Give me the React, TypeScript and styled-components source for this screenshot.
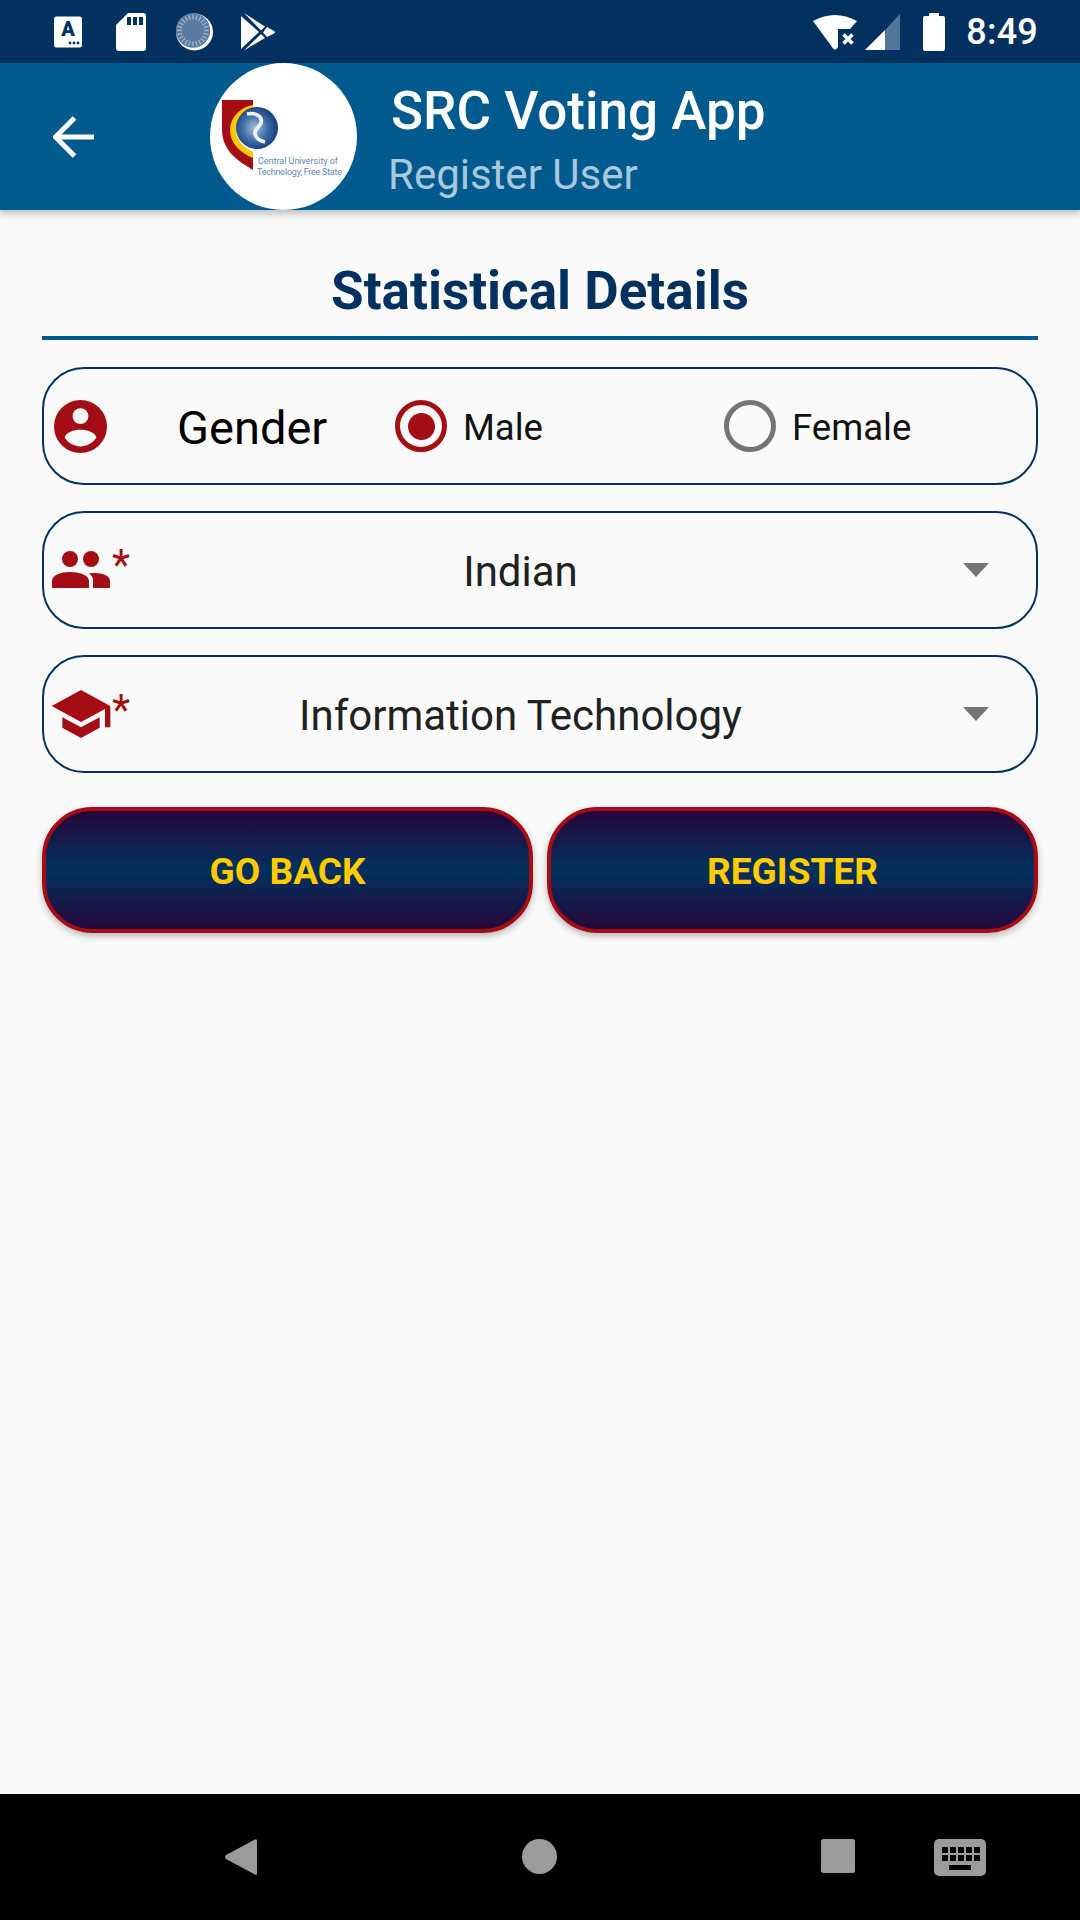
import React from "react";
import styled, { createGlobalStyle } from "styled-components";

const RED = "#a50d14";
const NAVY = "#03315f";

const Global = createGlobalStyle`
  html, body { margin: 0; padding: 0; background: #fafafa; }
  * { box-sizing: border-box; }
  #root { width: 1080px; height: 1920px; }
`;

const Screen = styled.div`
  width: 1080px;
  height: 1920px;
  display: flex;
  flex-direction: column;
  background: #fafafa;
  font-family: Roboto, "Noto Sans", sans-serif;
  overflow: hidden;
`;

const StatusBar = styled.div`
  height: 63px;
  flex: none;
  background: ${NAVY};
  display: flex;
  align-items: center;
  padding: 0 42px 0 54px;
`;

const StatusLeft = styled.div`
  display: flex;
  align-items: center;
  flex: 1;
`;

const StatusRight = styled.div`
  display: flex;
  align-items: center;
`;

const StatusIcon = styled.svg<{ $gap?: number }>`
  display: block;
  flex: none;
  margin-right: ${(p) => p.$gap ?? 0}px;
`;

const Clock = styled.span`
  font-size: 36px;
  font-weight: 500;
  color: #fff;
  line-height: 1;
  letter-spacing: 0.2px;
`;

const AppBar = styled.header`
  height: 147px;
  flex: none;
  background: #015a8d;
  display: flex;
  align-items: center;
  padding-left: 53px;
  box-shadow: 0 3px 8px rgba(0, 0, 0, 0.28);
  position: relative;
  z-index: 1;
`;

const BackIcon = styled.svg`
  display: block;
  flex: none;
  margin-right: 115px;
`;

const Logo = styled.svg`
  display: block;
  flex: none;
  margin-right: 34px;
`;

const Titles = styled.div`
  display: flex;
  flex-direction: column;
  padding-top: 10px;
`;

const AppTitle = styled.div`
  font-size: 53px;
  font-weight: 500;
  color: #fff;
  line-height: 56px;
`;

const AppSubtitle = styled.div`
  font-size: 42px;
  font-weight: 400;
  color: #a8c8dc;
  line-height: 50px;
  margin-left: -3px;
  margin-top: 11px;
`;

const Main = styled.main`
  flex: 1;
  padding: 0 42px;
  display: flex;
  flex-direction: column;
`;

const SectionTitle = styled.h1`
  margin: 0 0 27px;
  height: 130px;
  padding-top: 51px;
  border-bottom: 4px solid #015a8d;
  text-align: center;
  font-size: 53px;
  line-height: 60px;
  font-weight: 700;
  color: ${NAVY};
`;

const FieldRow = styled.div`
  height: 118px;
  flex: none;
  margin-bottom: 26px;
  border: 2.5px solid ${NAVY};
  border-radius: 42px;
  display: flex;
  align-items: center;
  padding-left: 8px;
`;

const RowIcon = styled.svg`
  display: block;
  flex: none;
`;

const GenderIcon = styled(RowIcon)`
  margin-left: 2px;
`;

const PeopleIcon = styled(RowIcon)`
  margin-top: 11px;
`;

const CapIcon = styled(RowIcon)`
  margin: -2px -3px 0 -3px;
`;

const GenderLabel = styled.span`
  font-size: 47px;
  color: #000;
  margin-left: 70px;
  width: 218px;
  padding-top: 2px;
`;

const RadioGroup = styled.label<{ $width: number }>`
  display: flex;
  align-items: center;
  width: ${(p) => p.$width}px;
`;

const RadioRing = styled.span<{ $on?: boolean }>`
  width: 52px;
  height: 52px;
  flex: none;
  border-radius: 50%;
  border: 5px solid ${(p) => (p.$on ? RED : "#757575")};
  display: flex;
  align-items: center;
  justify-content: center;
`;

const RadioDot = styled.span`
  width: 27px;
  height: 27px;
  border-radius: 50%;
  background: ${RED};
`;

const RadioText = styled.span`
  font-size: 36.5px;
  color: #111;
  margin-left: 16px;
  padding-top: 2px;
`;

const IconWrap = styled.div`
  display: flex;
  align-items: flex-start;
  width: 78px;
  height: 60px;
  flex: none;
`;

const Star = styled.span<{ $top: number }>`
  font-size: 42px;
  line-height: 42px;
  color: ${RED};
  margin-left: 2px;
  margin-top: ${(p) => p.$top}px;
`;

const SelectValue = styled.span`
  flex: 1;
  text-align: center;
  font-size: 42px;
  color: #212121;
  padding: 2px 52px 0 0;
`;

const Caret = styled.span`
  width: 0;
  height: 0;
  flex: none;
  margin-right: 47px;
  border-left: 13.5px solid transparent;
  border-right: 13.5px solid transparent;
  border-top: 14px solid #757575;
`;

const Buttons = styled.div`
  display: grid;
  grid-template-columns: 1fr 1fr;
  gap: 14px;
  margin-top: 8px;
`;

const ActionButton = styled.button`
  height: 126px;
  border: 4px solid ${RED};
  border-radius: 50px;
  background: linear-gradient(180deg, #25063a 0%, ${NAVY} 50%, #25063a 100%);
  color: #ffcc00;
  font-family: Roboto, sans-serif;
  font-weight: 700;
  font-size: 37px;
  box-shadow: 0 3px 7px rgba(0, 0, 0, 0.28);
  padding: 2px 0 0;
`;

const NavBar = styled.nav`
  height: 126px;
  flex: none;
  background: #000;
  display: flex;
  align-items: flex-start;
  padding: 45px 0 0 225px;
`;

const NavIcon = styled.svg<{ $gap: number }>`
  display: block;
  flex: none;
  margin-right: ${(p) => p.$gap}px;
`;

const ticks = Array.from({ length: 24 }, (_, i) => (i * 360) / 24);

export default function App() {
  return (
    <Screen>
      <Global />
      <StatusBar>
        <StatusLeft>
          <StatusIcon width="28" height="32" viewBox="0 0 28 32" $gap={34}>
            <rect x="0" y="0.5" width="28" height="31" rx="2.5" fill="#fff" />
            <text x="14" y="20" textAnchor="middle" fontFamily="Roboto" fontWeight="900" fontSize="20" fill={NAVY}>A</text>
            <circle cx="16" cy="27" r="1.4" fill={NAVY} />
            <circle cx="20" cy="27" r="1.4" fill={NAVY} />
            <circle cx="24" cy="27" r="1.4" fill={NAVY} />
          </StatusIcon>
          <StatusIcon width="30" height="38" viewBox="0 0 30 38" $gap={30}>
            <path d="M12 0H27a3 3 0 0 1 3 3V35a3 3 0 0 1-3 3H3a3 3 0 0 1-3-3V12Z" fill="#fff" />
            <rect x="11" y="4" width="4" height="8" fill={NAVY} />
            <rect x="17" y="4" width="4" height="8" fill={NAVY} />
            <rect x="23" y="4" width="4" height="8" fill={NAVY} />
          </StatusIcon>
          <StatusIcon width="37" height="38" viewBox="0 0 37 38" $gap={28}>
            <circle cx="18.5" cy="19" r="18.5" fill="#fff" />
            <circle cx="17" cy="17.5" r="17.2" fill="#5b7a9f" />
            {ticks.map((a) => (
              <rect key={a} x="16.4" y="1.5" width="1.3" height="5" fill="#a3b5ca" transform={`rotate(${a} 17 17.5)`} />
            ))}
          </StatusIcon>
          <StatusIcon width="35" height="38" viewBox="0 0 35 38">
            <path d="M0 3L18 19L0 36Z" fill="#fff" />
            <path d="M3 0L24 13.5L20 17.5Z" fill="#fff" />
            <path d="M3 37.5L20 21L24 25Z" fill="#fff" />
            <path d="M26 14L33 18Q35 19 33 20.5L26 24L22 19.5Z" fill="#fff" />
          </StatusIcon>
        </StatusLeft>
        <StatusRight>
          <StatusIcon width="44" height="36" viewBox="0 0 44 36" $gap={8}>
            <path d="M0 7Q22-5 44 7L37 15H25V33L23.5 35Q22 36 20.5 35Z" fill="#fff" />
            <path d="M30.5 20.5L39.5 29.5M39.5 20.5L30.5 29.5" stroke="#fff" strokeWidth="3.6" />
          </StatusIcon>
          <StatusIcon width="35" height="36" viewBox="0 0 35 36" $gap={23}>
            <path d="M0 36L20 16V36Z" fill="#fff" />
            <path d="M20 16L35 0V36H20Z" fill="#53759a" />
          </StatusIcon>
          <StatusIcon width="22" height="38" viewBox="0 0 22 38" $gap={21}>
            <path d="M6 3V1a1 1 0 0 1 1-1H15a1 1 0 0 1 1 1V3H20a2 2 0 0 1 2 2V36a2 2 0 0 1-2 2H2a2 2 0 0 1-2-2V5a2 2 0 0 1 2-2Z" fill="#fff" />
          </StatusIcon>
          <Clock>8:49</Clock>
        </StatusRight>
      </StatusBar>

      <AppBar>
        <BackIcon width="42" height="42" viewBox="0 0 42 42">
          <path d="M2 21H41M21.5 2L2.5 21L21.5 40" fill="none" stroke="#fff" strokeWidth="5" />
        </BackIcon>
        <Logo width="147" height="147" viewBox="0 0 147 147">
          <defs>
            <radialGradient id="globe" cx="0.45" cy="0.5" r="0.55">
              <stop offset="0" stopColor="#a9c0dc" />
              <stop offset="0.55" stopColor="#3f6ea8" />
              <stop offset="1" stopColor="#123e7a" />
            </radialGradient>
          </defs>
          <circle cx="73.5" cy="73.5" r="73.5" fill="#fff" />
          <path d="M12 37H43V107C28 98 12 88 12 66Z" fill={RED} />
          <path d="M43 42C30 44 20 55 20 67C20 80 30 90 43 95Z" fill="#fcc800" />
          <path d="M43 50C32 52 26 58 26 67C26 77 33 84 43 89Z" fill="#fff" />
          <circle cx="47" cy="65" r="21" fill="url(#globe)" />
          <path d="M37 51C46 49 53 54 51 60C49 65 44 66 45 71C46 75 50 78 55 79" fill="none" stroke="#f2f5fa" strokeWidth="3.6" />
          <text x="48" y="101" fontFamily="Roboto" fontSize="9" fill="#6087b8" textLength="80">Central University of</text>
          <text x="47" y="112" fontFamily="Roboto" fontSize="9" fill="#6087b8" textLength="85">Technology, Free State</text>
        </Logo>
        <Titles>
          <AppTitle>SRC Voting App</AppTitle>
          <AppSubtitle>Register User</AppSubtitle>
        </Titles>
      </AppBar>

      <Main>
        <SectionTitle>Statistical Details</SectionTitle>

        <FieldRow>
          <GenderIcon width="53" height="53" viewBox="0 0 24 24">
            <circle cx="12" cy="12" r="12" fill={RED} />
            <circle cx="12" cy="7.3" r="3.6" fill="#fafafa" />
            <path d="M4.8 17C5.5 14.6 9 13.5 12 13.5S18.5 14.6 19.2 17C17.6 19.6 14.8 21 12 21S6.4 19.6 4.8 17Z" fill="#fafafa" />
          </GenderIcon>
          <GenderLabel>Gender</GenderLabel>
          <RadioGroup $width={329}>
            <RadioRing $on><RadioDot /></RadioRing>
            <RadioText>Male</RadioText>
          </RadioGroup>
          <RadioGroup $width={300}>
            <RadioRing />
            <RadioText>Female</RadioText>
          </RadioGroup>
        </FieldRow>

        <FieldRow>
          <IconWrap>
            <PeopleIcon width="58" height="37" viewBox="0 0 58 37">
              <circle cx="18" cy="8" r="8" fill={RED} />
              <circle cx="39" cy="8" r="8" fill={RED} />
              <path d="M0 37V30C0 24 9 21 18 21C27 21 37 24 37 30V37Z" fill={RED} />
              <path d="M41 37V29C41 26 39 24 37 22.5C48 21 58 24 58 30V37Z" fill={RED} />
            </PeopleIcon>
            <Star $top={4}>*</Star>
          </IconWrap>
          <SelectValue>Indian</SelectValue>
          <Caret />
        </FieldRow>

        <FieldRow>
          <IconWrap>
            <CapIcon width="64" height="64" viewBox="0 0 24 24">
              <path d="M5 13.18v4L12 21l7-3.82v-4L12 17l-7-3.82zM12 3L1 9l11 6 9-4.91V17h2V9L12 3z" fill={RED} />
            </CapIcon>
            <Star $top={5}>*</Star>
          </IconWrap>
          <SelectValue>Information Technology</SelectValue>
          <Caret />
        </FieldRow>

        <Buttons>
          <ActionButton>GO BACK</ActionButton>
          <ActionButton>REGISTER</ActionButton>
        </Buttons>
      </Main>

      <NavBar>
        <NavIcon width="32" height="36" viewBox="0 0 32 36" $gap={265}>
          <path d="M30 0.5Q32 -0.5 32 2V34Q32 36.5 30 35.5L1 20Q-1 18 1 16Z" fill="#9b9b9b" />
        </NavIcon>
        <NavIcon width="35" height="35" viewBox="0 0 35 35" $gap={264}>
          <circle cx="17.5" cy="17.5" r="17.5" fill="#9b9b9b" />
        </NavIcon>
        <NavIcon width="34" height="34" viewBox="0 0 34 34" $gap={79}>
          <rect width="34" height="34" rx="2.5" fill="#9b9b9b" />
        </NavIcon>
        <NavIcon width="52" height="37" viewBox="0 0 52 37" $gap={0}>
          <rect width="52" height="37" rx="5" fill="#9b9b9b" />
          {[8, 16, 24, 32, 40].map((x) => (
            <React.Fragment key={x}>
              <rect x={x} y="8" width="6" height="6" fill="#000" />
              <rect x={x} y="16" width="6" height="6" fill="#000" />
            </React.Fragment>
          ))}
          <rect x="15" y="26" width="22" height="5" fill="#000" />
        </NavIcon>
      </NavBar>
    </Screen>
  );
}
